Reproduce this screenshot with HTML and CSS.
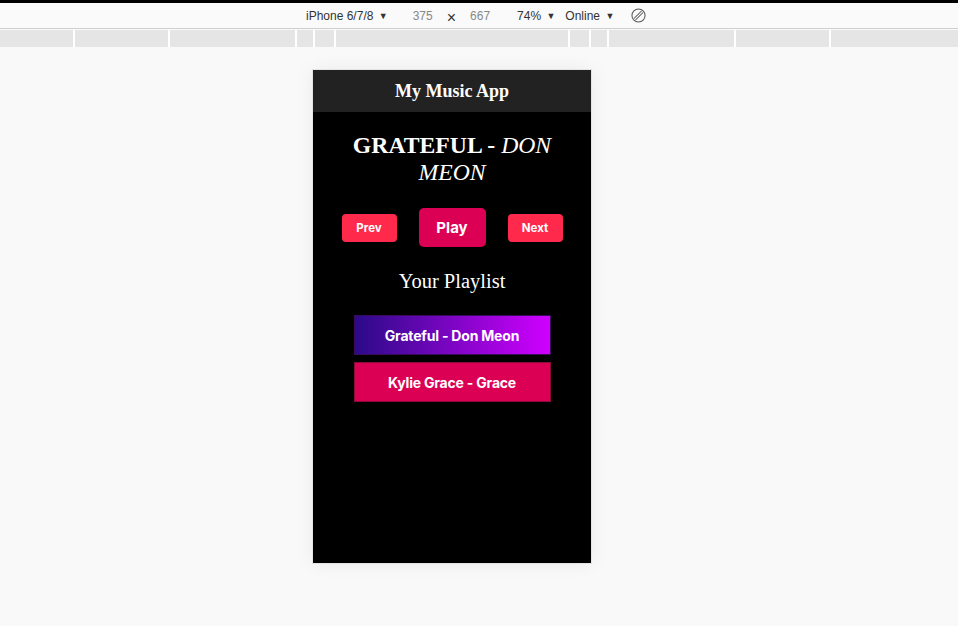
FILE: index.html
```html
<!DOCTYPE html>
<html>
<head>
<meta charset="utf-8">
<title>My Music App</title>
<link rel="stylesheet" href="styles.css">
</head>
<body>
<div class="devtools">
  <div class="topline"></div>
  <div class="toolbar">
    <span class="device">iPhone 6/7/8 <span class="caret">▼</span></span>
    <span class="dim">375</span>
    <span class="times">×</span>
    <span class="dim">667</span>
    <span class="zoom">74% <span class="caret">▼</span></span>
    <span class="net">Online <span class="caret">▼</span></span>
    <svg class="rotate" width="15" height="15" viewBox="0 0 16 16" fill="none" stroke="#555" stroke-width="1.1">
      <circle cx="8" cy="8" r="7"/>
      <path d="M3.2 11.2 L11.2 3.2 M4.8 12.8 L12.8 4.8"/>
    </svg>
  </div>
  <div class="ruler">
    <i></i><i></i><i></i><i></i><i></i><i></i><i></i><i></i><i></i><i></i><i></i>
  </div>
</div>
<div class="stage">
  <div class="phone">
    <header class="app-header">My Music App</header>
    <main class="app-body">
      <h1 class="now-playing">GRATEFUL - <span class="artist">DON MEON</span></h1>
      <div class="controls">
        <button class="btn btn-small">Prev</button>
        <button class="btn btn-play">Play</button>
        <button class="btn btn-small">Next</button>
      </div>
      <h2 class="playlist-title">Your Playlist</h2>
      <ul class="playlist">
        <li class="track track-active">Grateful - Don Meon</li>
        <li class="track">Kylie Grace - Grace</li>
      </ul>
    </main>
  </div>
</div>
</body>
</html>
```
FILE: styles.css
```css
* { box-sizing: border-box; }
html, body { margin: 0; padding: 0; }
body {
  background: #f9f9f9;
  font-family: "Liberation Sans", Arial, sans-serif;
  width: 958px;
  height: 626px;
  overflow: hidden;
}
.topline { height: 3px; background: #000; }
.toolbar {
  height: 26px;
  background: #fafafa;
  border-bottom: 1px solid #cfcfcf;
  display: flex;
  align-items: center;
  padding-left: 306px;
  font-size: 12px;
  color: #333;
}
.caret { font-size: 9px; margin-left: 2px; position: relative; top: -1px; }
.device { margin-right: 25px; }
.dim { color: #888; }
.times { margin: 0 14px; font-size: 16px; color: #333; line-height: 1; position: relative; top: 2px; }
.zoom { margin-left: 27px; margin-right: 10px; }
.net { margin-right: 17px; }
.rotate { display: block; }
.ruler {
  margin-top: 1px;
  height: 17px;
  background: #fff;
  display: grid;
  grid-template-columns: 73px 93px 125px 16px 19px 232px 19px 16px 125px 93px 1fr;
  column-gap: 2px;
}
.ruler i { background: #e5e5e5; display: block; }
.stage {
  display: flex;
  justify-content: flex-start;
  padding-top: 22px;
  padding-left: 312px;
}
.phone {
  width: 280px;
  height: 495px;
  border: 1px solid #e4e4e4;
  background: #000;
  box-shadow: 0 0 18px rgba(0,0,0,0.06);
  display: flex;
  flex-direction: column;
}
.app-header {
  height: 42px;
  background: #222;
  color: #fff;
  font-family: "Liberation Serif", "Times New Roman", serif;
  font-weight: bold;
  font-size: 18px;
  display: flex;
  align-items: center;
  justify-content: center;
}
.app-body {
  color: #fff;
  text-align: center;
  padding: 0 24px;
}
.now-playing {
  font-family: "Liberation Serif", "Times New Roman", serif;
  font-size: 23.7px;
  line-height: 27px;
  margin: 20px 0 0;
  font-weight: bold;
}
.artist { font-style: italic; font-weight: normal; }
.controls {
  display: flex;
  justify-content: center;
  align-items: center;
  gap: 22px;
  margin-top: 22px;
}
.btn {
  border: none;
  color: #fff;
  font-family: Inter, Roboto, sans-serif;
  font-weight: 700;
  border-radius: 4px;
  padding: 0;
}
.btn-small {
  width: 55px;
  height: 28px;
  background: #ff2a4b;
  font-size: 11.5px;
}
.btn-play {
  width: 67px;
  height: 39px;
  background: #dc0055;
  font-size: 15px;
  border-radius: 5px;
}
.playlist-title {
  font-family: "Liberation Serif", "Times New Roman", serif;
  font-weight: normal;
  font-size: 20.5px;
  margin: 22px 0 0;
  line-height: 24px;
}
.playlist {
  list-style: none;
  margin: 22px 0 0;
  padding: 0;
  display: flex;
  flex-direction: column;
  align-items: center;
  gap: 7px;
}
.track {
  width: 197px;
  height: 40px;
  display: flex;
  align-items: center;
  justify-content: center;
  font-family: Inter, Roboto, sans-serif;
  font-weight: 700;
  font-size: 14px;
  letter-spacing: -0.2px;
  background: #dc0055;
  border: 1px solid #8a0a3a;
}
.track-active {
  background: linear-gradient(to right, #2b0a88, #d000ff);
  border-color: #3a0a5a;
}
```
